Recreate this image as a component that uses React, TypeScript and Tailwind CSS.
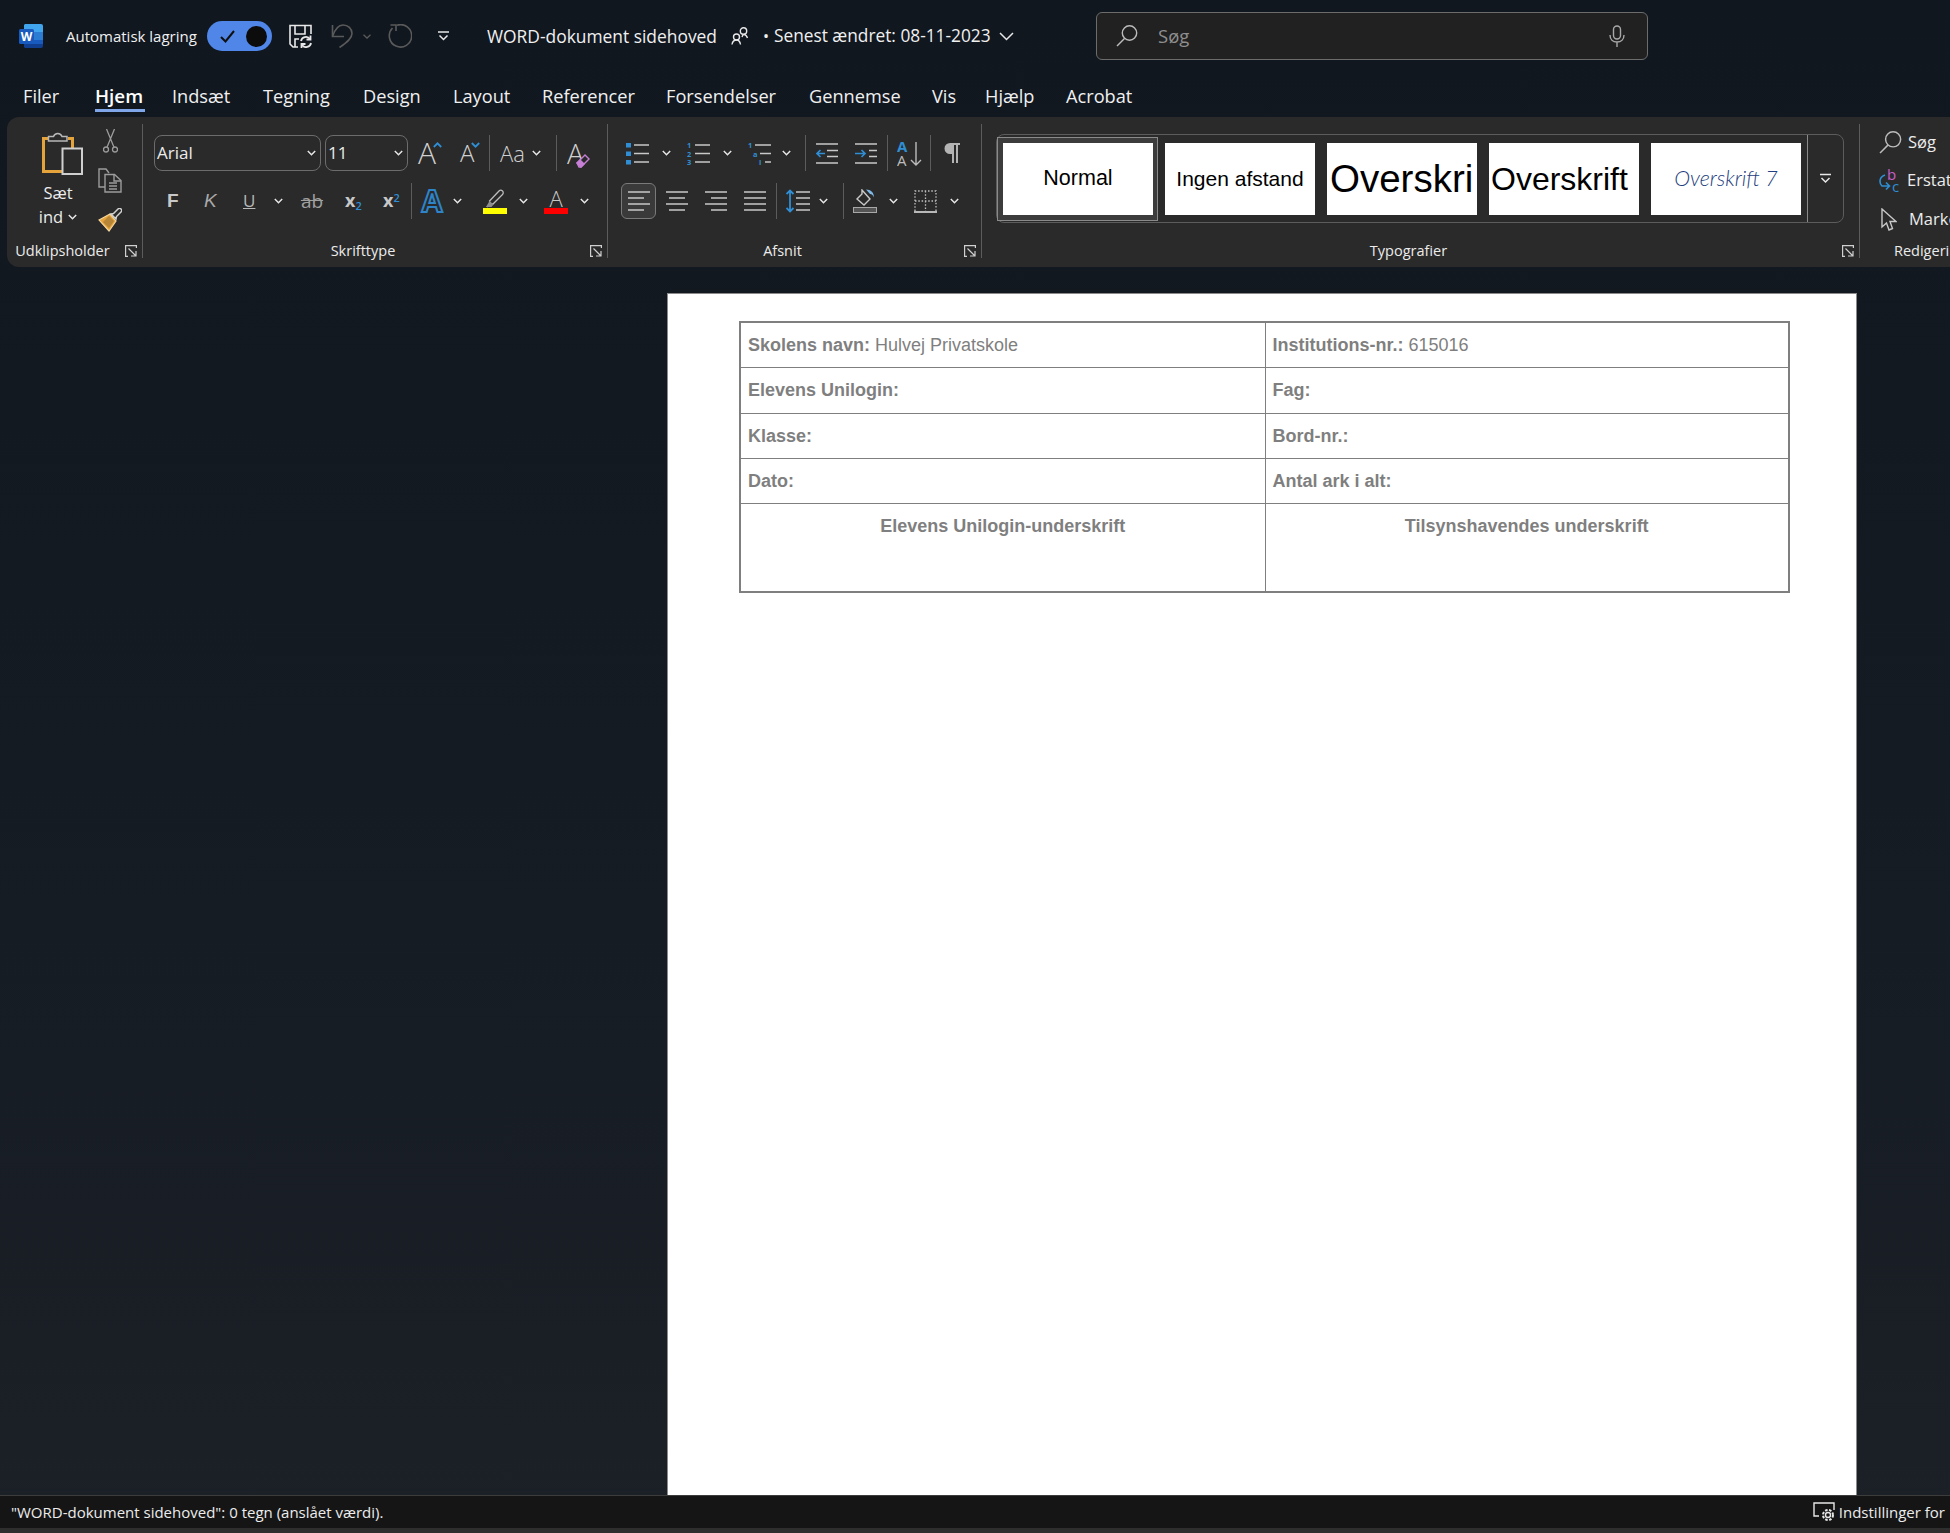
import React from 'react'

const Chev = ({ className = '' }: { className?: string }) => (
  <svg className={`w-[9px] h-[6px] shrink-0 ${className}`} viewBox="0 0 9 6" fill="none" stroke="#e6e6e6" strokeWidth="1.5">
    <path d="M.8 1l3.7 3.7L8.2 1" />
  </svg>
)

const Sep = ({ className = '' }: { className?: string }) => <div className={`w-px h-[36px] shrink-0 bg-[#5c5c5c] ${className}`} />

const Launcher = () => (
  <svg className="w-[12px] h-[12px]" viewBox="0 0 12 12" fill="none" stroke="#d0d0d0" strokeWidth="1.2">
    <path d="M11.4 3V.6H.6v10.8H3" />
    <path d="M3.5 3.5l7 7M11 6V11H6" />
  </svg>
)

const Group = ({ label, width, children, launcher = true }: { label: string; width: string; children: React.ReactNode; launcher?: boolean }) => (
  <div className={`${width} h-[134px] mt-[7px] shrink-0 flex flex-col border-r border-[#5c5c5c]`}>
    <div className="h-[120px]">{children}</div>
    <div className="h-[14px] flex items-center text-[14.500px] leading-[14px] text-[#ececec] whitespace-nowrap">
      <span className="flex-1 text-center pr-[7px]">{label}</span>
      {launcher && <span className="mr-[5px] flex"><Launcher /></span>}
    </div>
  </div>
)

function WordLogo() {
  return (
    <svg className="w-[24px] h-[24px]" viewBox="0 0 24 24">
      <path d="M6 0h16a2 2 0 0 1 2 2v6H5V1z" fill="#41a5ee" />
      <rect x="5" y="8" width="19" height="8" fill="#2b7cd3" />
      <rect x="5" y="16" width="19" height="4" fill="#185abd" />
      <path d="M5 20h19v2a2 2 0 0 1-2 2H6l-1-1z" fill="#103f91" />
      <rect x="0" y="5" width="15" height="15" rx="1.5" fill="#185abd" />
      <text x="7.5" y="16.5" textAnchor="middle" fontSize="12" fontWeight="700" fill="#fff" fontFamily="Open Sans">W</text>
    </svg>
  )
}

function SaveIcon() {
  return (
    <svg className="w-[24px] h-[24px]" viewBox="0 0 24 24" fill="none" stroke="#e8e8e8" strokeWidth="1.6">
      <path d="M10 23H5l-3-3V1.500h21V10" />
      <path d="M7 2v8h10V2M7 23v-8h4" />
      <path d="M13 17a5 5 0 0 1 9-2M23 19a5 5 0 0 1-9 2" strokeWidth="1.800" />
      <path d="M22.500 11.500v4h-4M13.500 24v-4h4" strokeWidth="1.800" />
    </svg>
  )
}

const UndoIcon = () => (
  <svg className="w-[23px] h-[24px]" viewBox="0 0 23 24" fill="none" stroke="#5a5a5a" strokeWidth="1.6">
    <path d="M1.500 1v11.500H13" />
    <path d="M1.500 12.500C4 5 8 1 12 1c5 0 9 3.500 9 8.500 0 5-5 9-12.500 14" />
  </svg>
)

const RedoIcon = () => (
  <svg className="w-[24px] h-[24px]" viewBox="0 0 24 24" fill="none" stroke="#5a5a5a" strokeWidth="1.6">
    <path d="M9 1.200A11.200 11.200 0 1 1 4.500 4" />
    <path d="M2.500 1h5.500v6" />
  </svg>
)

const Customize = () => (
  <svg className="w-[11px] h-[10px]" viewBox="0 0 11 10" fill="none" stroke="#e8e8e8" strokeWidth="1.5">
    <path d="M0 1h11" />
    <path d="M1.500 4.500L5.500 8.500l4-4" />
  </svg>
)

const People = () => (
  <svg className="w-[18px] h-[18px]" viewBox="0 0 18 18" fill="none" stroke="#e8e8e8" strokeWidth="1.4">
    <circle cx="5.500" cy="10" r="3" />
    <circle cx="12.500" cy="4" r="3.200" />
    <path d="M1 17.500c.5-3 2.500-4.500 4.500-4.500s3.500 1.500 4 4.500" />
    <path d="M11 10c.5-2 1-2.500 2-2.500s2.500 1 3.500 3.500" />
  </svg>
)

const SearchIcon = ({ className = '' }: { className?: string }) => (
  <svg className={`shrink-0 ${className}`} viewBox="0 0 22 22" fill="none" stroke="#bcbcbc" strokeWidth="1.400">
    <circle cx="13.500" cy="8" r="7.200" />
    <path d="M8.500 13.500L1 21" />
  </svg>
)

const Mic = () => (
  <svg className="w-[16px] h-[22px]" viewBox="0 0 16 22" fill="none" stroke="#a8a8a8" strokeWidth="1.4">
    <rect x="4.500" y="1" width="7" height="13" rx="3.500" />
    <path d="M1 10c0 4.500 3 7 7 7s7-2.500 7-7M8 17v5" />
  </svg>
)

const PasteIcon = () => (
  <svg className="w-[41px] h-[45px]" viewBox="0 0 41 45" fill="none">
    <path d="M6 8.500H1.500V41.500H20" stroke="#e5a33b" strokeWidth="3" />
    <path d="M26 8.500H30.500V18" stroke="#e5a33b" strokeWidth="3" />
    <path d="M6.500 11V6.500h5a4.500 4.500 0 0 1 8.500 0h5V11z" stroke="#b8b8b8" strokeWidth="1.500" fill="#2a2a2a" />
    <rect x="20.500" y="18.500" width="19.500" height="25.500" stroke="#cfcfcf" strokeWidth="2" fill="#2a2a2a" />
  </svg>
)

const Scissors = () => (
  <svg className="w-[15px] h-[24px]" viewBox="0 0 15 24" fill="none" stroke="#9c9c9c" strokeWidth="1.300">
    <circle cx="3" cy="20.500" r="2.500" />
    <circle cx="12" cy="20.500" r="2.500" />
    <path d="M4 18.300L11.500 0M11 18.300L3.500 0" />
  </svg>
)

const CopyIcon = () => (
  <svg className="w-[24px] h-[25px]" viewBox="0 0 24 25" fill="none" stroke="#9c9c9c" strokeWidth="1.400">
    <path d="M7 19H1V1h7l3 4" />
    <path d="M7 6.500h9.500L23 12.500V24H7z" fill="#2a2a2a" />
    <path d="M16 7v6h7M11 15h8M11 18h8M11 21h8" />
  </svg>
)

const BrushIcon = () => (
  <svg className="w-[24px] h-[24px]" viewBox="0 0 24 24" fill="none">
    <path d="M1 12l11-6 6 7-7 10z" fill="#e5a33b" stroke="#f4d59a" strokeWidth="1.200" />
    <path d="M5 14l6 6 5-7-5-5z" fill="#2a2a2a" fillOpacity=".25" />
    <path d="M13 6l2.500-.5L20 1a2 2 0 0 1 3 3l-4.500 4.500L18 11z" stroke="#d0d0d0" strokeWidth="1.500" fill="#2a2a2a" />
  </svg>
)

const Caret = ({ down = false }: { down?: boolean }) => (
  <svg className="w-[9px] h-[6px] self-start mt-[7px] -ml-[3px] shrink-0" viewBox="0 0 9 6" fill="none" stroke="#2f8ed4" strokeWidth="1.800">
    <path d={down ? 'M.8 1l3.700 3.700L8.200 1' : 'M.8 5l3.700-3.700L8.200 5'} />
  </svg>
)

const Eraser = () => (
  <svg className="w-[14px] h-[14px]" viewBox="0 0 14 14" fill="none" stroke="#c77fd6" strokeWidth="1.400">
    <path d="M1 9l8-8 4 4-8 8H3z" fill="#2a2a2a" />
    <path d="M1 9l4 4 3-3-4-4z" fill="#c77fd6" />
  </svg>
)

const FontBlue = () => (
  <svg className="w-[24px] h-[24px]" viewBox="0 0 24 24">
    <text x="12" y="23" textAnchor="middle" fontSize="30" fontWeight="700" fill="#2a2a2a" stroke="#2d84c8" strokeWidth="2" fontFamily="Open Sans">A</text>
  </svg>
)

const HighlightIcon = () => (
  <div className="w-[24px] flex flex-col items-center">
    <svg className="w-[24px] h-[19px]" viewBox="0 0 24 19" fill="none">
      <path d="M4 18l3-3-.5-3L16 2a2.200 2.200 0 0 1 3.500 3.500L10 15l-3 0z" stroke="#bcbcbc" strokeWidth="1.300" />
      <path d="M3 18l3.500-6 4 3.500-2 2.500z" fill="#8c8c8c" />
    </svg>
    <div className="w-[24px] h-[6px] bg-[#ffff00]" />
  </div>
)

const Lines = ({ rows }: { rows: [number, number][] }) => (
  <svg className="w-[22px] h-[20px]" viewBox="0 0 22 20" stroke="#c8c8c8" strokeWidth="1.500">
    {rows.map((r, i) => <path key={i} d={`M${r[0]} ${1 + i * 6}H${r[1]}`} />)}
  </svg>
)

const BulletList = () => (
  <svg className="w-[23px] h-[23px]" viewBox="0 0 23 23" stroke="#c8c8c8" strokeWidth="1.500">
    <path d="M8 3h15M8 11.500h15M8 20h15" />
    <g fill="#2f8ed4" stroke="none">
      <rect x="0" y="1" width="5" height="4.500" />
      <rect x="0" y="9.500" width="5" height="4.500" />
      <rect x="0" y="18" width="5" height="4.500" />
    </g>
  </svg>
)

const NumberList = () => (
  <svg className="w-[23px] h-[23px]" viewBox="0 0 23 23" stroke="#c8c8c8" strokeWidth="1.500">
    <path d="M8 3h15M8 11.500h15M8 20h15" />
    <g fill="#2f8ed4" stroke="none" fontSize="7.500" fontWeight="700" fontFamily="Open Sans">
      <text x="0" y="6">1</text>
      <text x="0" y="14.500">2</text>
      <text x="0" y="23">3</text>
    </g>
  </svg>
)

const MultiList = () => (
  <svg className="w-[23px] h-[23px]" viewBox="0 0 23 23" stroke="#c8c8c8" strokeWidth="1.500">
    <path d="M7 3h16M12 11.500h11M17 20h6" />
    <g fill="#2f8ed4" stroke="none" fontSize="7.500" fontWeight="700" fontFamily="Open Sans">
      <text x="0" y="6">1</text>
      <text x="5" y="14.500">a</text>
      <text x="11" y="23">i</text>
    </g>
  </svg>
)

const Indent = ({ flip = false }: { flip?: boolean }) => (
  <svg className="w-[22px] h-[21px]" viewBox="0 0 22 21" fill="none">
    <path d={flip ? 'M0 1h22M0 20h22M14 7.500h8M14 13.500h8' : 'M0 1h22M0 20h22M11 7.500h11M11 13.500h11'} stroke="#c8c8c8" strokeWidth="1.500" />
    <path d={flip ? 'M0 10.500h10M6.500 7l3.500 3.500L6.500 14' : 'M1 10.500h8M4.500 7L1 10.500 4.500 14'} stroke="#2f8ed4" strokeWidth="1.700" />
  </svg>
)

const SortIcon = () => (
  <svg className="w-[25px] h-[25px]" viewBox="0 0 25 25" fill="none">
    <text x="0" y="11" fontSize="15" fontWeight="700" fill="#2f8ed4" fontFamily="Open Sans">A</text>
    <text x="0" y="25" fontSize="15" fontWeight="400" fill="#bcbcbc" fontFamily="Open Sans">A</text>
    <path d="M19 1v23M14 19l5 5 5-5" stroke="#bcbcbc" strokeWidth="1.400" />
  </svg>
)

const Pilcrow = () => (
  <svg className="w-[16px] h-[20px]" viewBox="0 0 16 20" fill="#b4b4b4">
    <path d="M6 0h10v2h-2v18h-2V2h-2v18H8V11H6A5.500 5.500 0 0 1 6 0z" />
  </svg>
)

const SpacingIcon = () => (
  <svg className="w-[24px] h-[24px]" viewBox="0 0 24 24" fill="none">
    <path d="M10 3h14M10 9h14M10 15h14M10 21h14" stroke="#c8c8c8" strokeWidth="1.500" />
    <path d="M4 1v22M.5 5L4 1.500 7.500 5M.5 19L4 22.500 7.500 19" stroke="#2f8ed4" strokeWidth="1.800" />
  </svg>
)

const ShadingIcon = () => (
  <svg className="w-[24px] h-[24px]" viewBox="0 0 24 24" fill="none">
    <path d="M9 1l8 9-6 6-7-6 5-5z" stroke="#c8c8c8" strokeWidth="1.400" />
    <path d="M13 .5c5 0 8 3 8 8-1-2-2-3.500-4-3.500z" fill="#7fb8e6" />
    <rect x=".5" y="18.500" width="23" height="5" fill="#555" stroke="#a8a8a8" />
  </svg>
)

const BordersIcon = () => (
  <svg className="w-[23px] h-[23px]" viewBox="0 0 23 23" fill="none">
    <path d="M1 21V1h21v20M11.500 1v20M1 11h21" stroke="#c0c0c0" strokeWidth="1.300" strokeDasharray="1.500 1.800" />
    <path d="M0 22h23" stroke="#e8e8e8" strokeWidth="1.500" />
  </svg>
)

const MoreIcon = () => (
  <svg className="w-[11px] h-[11px]" viewBox="0 0 11 11" fill="none" stroke="#e8e8e8" strokeWidth="1.500">
    <path d="M0 1.500h11M1.500 5L5.500 9l4-4" />
  </svg>
)

const ReplaceIcon = () => (
  <svg className="w-[22px] h-[26px] shrink-0" viewBox="0 0 22 26" fill="none">
    <text x="8" y="12" fontSize="15" fill="#c75fc9" fontFamily="Open Sans">b</text>
    <text x="13" y="24" fontSize="15" fill="#2f8ed4" fontFamily="Open Sans">c</text>
    <path d="M6 7C0 9 0 15 3 18h7M7 14.500l3.500 3.500L7 21.500" stroke="#2f8ed4" strokeWidth="1.600" />
  </svg>
)

const CursorIcon = () => (
  <svg className="w-[16px] h-[23px] shrink-0" viewBox="0 0 16 23" fill="none" stroke="#c8c8c8" strokeWidth="1.400">
    <path d="M1 1v18l4.500-4 2.500 7 3.500-1.500L9 13.500h6z" />
  </svg>
)

const SettingsIcon = () => (
  <svg className="w-[22px] h-[20px]" viewBox="0 0 22 20" fill="none" stroke="#e8e8e8" strokeWidth="1.400">
    <path d="M6 14H1V1h20v7" />
    <circle cx="15" cy="13" r="2.500" />
    <circle cx="15" cy="13" r="5" strokeDasharray="2.500 1.500" strokeWidth="2" />
  </svg>
)

const Cell = ({ label, value, center = false }: { label: string; value?: string; center?: boolean }) => (
  <td className={`border border-[#7f7f7f] align-top pt-[12px] px-[7px] leading-[20px] ${center ? 'text-center' : ''}`}>
    <b>{label}</b>{value ? ` ${value}` : ''}
  </td>
)

export default function App() {
  return (
    <div className="w-[1950px] h-[1533px] overflow-hidden flex flex-col bg-linear-to-b from-[#10171f] via-[#141b23] to-[#1c2027] text-white font-['Open_Sans','Noto_Sans',sans-serif]">
      {/* title bar */}
      <div className="h-[72px] shrink-0 flex items-center pl-[19px] text-[15px] text-[#f0f0f0]">
        <WordLogo />
        <span className="ml-[23px] w-[141px] whitespace-nowrap text-[15px]">Automatisk lagring</span>
        <div className="w-[65px] h-[30px] rounded-full bg-[#4f86e8] flex items-center justify-between pl-[13px] pr-[5px]">
          <svg className="w-[15px] h-[13px]" viewBox="0 0 15 13" fill="none" stroke="#101010" strokeWidth="2"><path d="M1 7l4.500 4.500L14 1" /></svg>
          <div className="w-[21px] h-[21px] rounded-full bg-[#0c0c0c]" />
        </div>
        <div className="ml-[16px] flex"><SaveIcon /></div>
        <div className="ml-[19px] flex"><UndoIcon /></div>
        <svg className="ml-[9px] w-[8px] h-[5px]" viewBox="0 0 8 5" fill="none" stroke="#5a5a5a" strokeWidth="1.300"><path d="M.5.8L4 4 7.500.8" /></svg>
        <div className="ml-[17px] flex"><RedoIcon /></div>
        <div className="ml-[26px] flex"><Customize /></div>
        <span className="ml-[38px] w-[244px] whitespace-nowrap text-[17.400px]">WORD-dokument sidehoved</span>
        <People />
        <span className="ml-[14px] w-[11px] text-[16px]">•</span>
        <span className="w-[225px] whitespace-nowrap text-[17.300px]">Senest ændret: 08-11-2023</span>
        <svg className="w-[15px] h-[9px]" viewBox="0 0 15 9" fill="none" stroke="#e8e8e8" strokeWidth="1.500"><path d="M1 1l6.500 6.500L14 1" /></svg>
        <div className="ml-[82px] w-[552px] h-[48px] rounded-md border border-[#6c6c6c] bg-[#212121] flex items-center pl-[19px] pr-[22px]">
          <SearchIcon className="w-[22px] h-[22px]" />
          <span className="ml-[20px] text-[18.500px] text-[#8e8e8e]">Søg</span>
          <div className="ml-auto flex"><Mic /></div>
        </div>
      </div>

      {/* tabs */}
      <div className="h-[45px] shrink-0 ml-[23px] grid grid-cols-[72px_77px_91px_100px_90px_89px_124px_143px_123px_53px_81px_auto] text-[18.200px] text-[#f0f0f0] items-start pt-[12px] leading-[24px]">
        <span>Filer</span>
        <span className="w-[50px] pb-[1px] border-b-[3px] border-[#7ea6e8] h-[28px] font-semibold text-white text-[18.800px] whitespace-nowrap">Hjem</span>
        <span>Indsæt</span>
        <span>Tegning</span>
        <span>Design</span>
        <span>Layout</span>
        <span>Referencer</span>
        <span>Forsendelser</span>
        <span>Gennemse</span>
        <span>Vis</span>
        <span>Hjælp</span>
        <span>Acrobat</span>
      </div>

      {/* ribbon */}
      <div className="h-[150px] shrink-0 ml-[7px] flex bg-[#2a2a2a] rounded-l-xl overflow-hidden">
        <Group label="Udklipsholder" width="w-[136px]">
          <div className="flex">
            <div className="w-[62px] ml-[20px] pt-[6px] flex flex-col items-center text-[16.500px] leading-[24px] text-[#ececec]">
              <div className="ml-[9px] flex"><PasteIcon /></div>
              <span className="mt-[6px]">Sæt</span>
              <span className="flex items-center gap-[5px]">ind <Chev /></span>
            </div>
            <div className="ml-[9px] w-[24px] pt-[5px] flex flex-col items-center gap-[15px]">
              <Scissors />
              <CopyIcon />
              <BrushIcon />
            </div>
          </div>
        </Group>

        <Group label="Skrifttype" width="w-[465px]">
          <div className="pt-[11px] flex flex-col gap-[12px]">
            <div className="h-[36px] flex items-center text-[#d0d0d0]">
              <div className="ml-[11px] w-[167px] h-[36px] rounded-lg border border-[#6c6c6c] flex items-center justify-between pl-[2px] pr-[4px] text-[17px] text-[#ececec]">Arial <Chev /></div>
              <div className="ml-[4px] w-[83px] h-[36px] rounded-lg border border-[#6c6c6c] flex items-center justify-between pl-[2px] pr-[4px] text-[17px] text-[#ececec]">11 <Chev /></div>
              <div className="ml-[10px] w-[24px] flex items-center"><span className="text-[30px] leading-[36px] font-light">A</span><Caret /></div>
              <div className="ml-[18px] w-[20px] flex items-center"><span className="text-[24px] leading-[36px] font-light">A</span><Caret down /></div>
              <Sep className="ml-[9px]" />
              <span className="ml-[10px] w-[23px] text-[22px] font-light whitespace-nowrap">Aa</span>
              <Chev className="ml-[9px]" />
              <Sep className="ml-[15px]" />
              <div className="relative ml-[10px] w-[23px]">
                <span className="text-[28px] leading-[36px] font-light">A</span>
                <div className="absolute right-0 bottom-[3px] flex"><Eraser /></div>
              </div>
            </div>
            <div className="h-[36px] flex items-center text-[#c8c8c8]">
              <span className="ml-[24px] w-[10px] pb-[2px] font-['Liberation_Sans',sans-serif] font-bold text-[19px] leading-none">F</span>
              <span className="ml-[27px] w-[13px] pb-[2px] font-['Liberation_Sans',sans-serif] italic text-[#a8a8a8] text-[19px] leading-none">K</span>
              <span className="ml-[26px] w-[13px] text-[17px] leading-[20px] underline text-[#b8b8b8]">U</span>
              <Chev className="ml-[18px]" />
              <span className="ml-[17px] w-[24px] text-[19px] text-[#a0a0a0] line-through text-center leading-[24px]">ab</span>
              <span className="ml-[21px] w-[17px] pb-[2px] font-bold text-[18px] leading-[20px] whitespace-nowrap">x<sub className="text-[11px] text-[#2f8ed4] font-semibold">2</sub></span>
              <span className="ml-[21px] w-[17px] pb-[2px] font-bold text-[18px] leading-[20px] whitespace-nowrap">x<sup className="text-[11px] text-[#2f8ed4] font-semibold">2</sup></span>
              <Sep className="ml-[11px]" />
              <div className="ml-[8px] flex"><FontBlue /></div>
              <Chev className="ml-[9px]" />
              <div className="ml-[21px] flex"><HighlightIcon /></div>
              <Chev className="ml-[12px]" />
              <div className="ml-[16px] w-[24px] flex flex-col items-center">
                <span className="text-[22px] leading-[19px] font-light">A</span>
                <div className="w-[24px] h-[6px] bg-[#ff0000]" />
              </div>
              <Chev className="ml-[12px]" />
            </div>
          </div>
        </Group>

        <Group label="Afsnit" width="w-[374px]">
          <div className="pt-[11px] flex flex-col gap-[12px]">
            <div className="h-[36px] flex items-center">
              <div className="ml-[18px] flex"><BulletList /></div>
              <Chev className="ml-[13px]" />
              <div className="ml-[16px] flex"><NumberList /></div>
              <Chev className="ml-[13px]" />
              <div className="ml-[16px] flex"><MultiList /></div>
              <Chev className="ml-[11px]" />
              <Sep className="ml-[14px]" />
              <div className="ml-[10px] flex"><Indent /></div>
              <div className="ml-[17px] flex"><Indent flip /></div>
              <Sep className="ml-[10px]" />
              <div className="ml-[9px] flex"><SortIcon /></div>
              <Sep className="ml-[8px]" />
              <div className="ml-[13px] flex"><Pilcrow /></div>
            </div>
            <div className="h-[36px] flex items-center">
              <div className="ml-[13px] w-[35px] h-[36px] rounded-md border border-[#7a7a7a] bg-[#3a3a3a] flex items-center justify-center">
                <Lines rows={[[0, 22], [0, 16], [0, 22], [0, 16]]} />
              </div>
              <div className="ml-[10px] flex"><Lines rows={[[0, 22], [3, 19], [0, 22], [3, 19]]} /></div>
              <div className="ml-[17px] flex"><Lines rows={[[0, 22], [6, 22], [0, 22], [6, 22]]} /></div>
              <div className="ml-[17px] flex"><Lines rows={[[0, 22], [0, 22], [0, 22], [0, 22]]} /></div>
              <Sep className="ml-[10px]" />
              <div className="ml-[9px] flex"><SpacingIcon /></div>
              <Chev className="ml-[9px]" />
              <Sep className="ml-[15px]" />
              <div className="ml-[9px] flex"><ShadingIcon /></div>
              <Chev className="ml-[12px]" />
              <div className="ml-[16px] flex"><BordersIcon /></div>
              <Chev className="ml-[13px]" />
            </div>
          </div>
        </Group>

        <Group label="Typografier" width="w-[878px]">
          <div className="ml-[14px] mt-[10px] w-[848px] h-[89px] rounded-lg border border-[#5c5c5c] flex text-black font-['Liberation_Sans',sans-serif]">
            <div className="mt-[2px] h-[84px] w-[161px] border border-[#8a8a8a] bg-[#3c3c3c] pl-[5px] pt-[5px] shrink-0">
              <div className="w-[150px] h-[72px] bg-white flex items-center justify-center text-[21.500px] pb-[1px]">Normal</div>
            </div>
            <div className="ml-[7px] mt-[8px] w-[150px] h-[72px] bg-white flex items-center justify-center text-[21px] pb-[1px] shrink-0 whitespace-nowrap">Ingen afstand</div>
            <div className="ml-[12px] mt-[8px] w-[150px] h-[72px] bg-white flex items-center pl-[3px] text-[38.500px] shrink-0 overflow-hidden whitespace-nowrap">Overskri</div>
            <div className="ml-[12px] mt-[8px] w-[150px] h-[72px] bg-white flex items-center pl-[2px] text-[32px] shrink-0 overflow-hidden whitespace-nowrap">Overskrift</div>
            <div className="ml-[12px] mt-[8px] w-[150px] h-[72px] bg-white flex items-center justify-center text-[21.500px] pb-[2px] italic font-light text-[#1f3f80] shrink-0 font-['Lato',sans-serif] whitespace-nowrap">Overskrift 7</div>
            <div className="ml-auto w-[36px] border-l border-[#8a8a8a] rounded-r-lg flex items-center justify-center"><MoreIcon /></div>
          </div>
        </Group>

        <div className="pt-[6px] w-[90px] shrink-0 overflow-hidden whitespace-nowrap flex flex-col text-[16.500px] text-[#ececec]">
          <div className="h-[121px] pl-[19px] flex flex-col">
            <div className="h-[38px] flex items-center gap-[6px]"><SearchIcon className="w-[23px] h-[23px]" /> Søg</div>
            <div className="h-[39px] flex items-center gap-[6px]"><ReplaceIcon /> Erstat</div>
            <div className="h-[39px] flex items-center gap-[12px] pl-[2px]"><CursorIcon /> Marker</div>
          </div>
          <span className="h-[14px] pl-[34px] text-[14.500px] leading-[14px]">Redigering</span>
        </div>
      </div>

      {/* document */}
      <div className="flex-1 min-h-0 pt-[26px] pl-[667px] overflow-hidden">
        <div className="w-[1190px] h-[1300px] bg-white border-x border-t border-[#8a8a8a] pt-[27px] pl-[71px] text-[#7f7f7f] font-['Liberation_Sans',sans-serif] text-[18px]">
          <table className="w-[1051px] table-fixed border-collapse border-2 border-[#7f7f7f]">
            <colgroup>
              <col className="w-[525px]" />
              <col />
            </colgroup>
            <tbody>
              <tr className="h-[45px]"><Cell label="Skolens navn:" value="Hulvej Privatskole" /><Cell label="Institutions-nr.:" value="615016" /></tr>
              <tr className="h-[46px]"><Cell label="Elevens Unilogin:" /><Cell label="Fag:" /></tr>
              <tr className="h-[45px]"><Cell label="Klasse:" /><Cell label="Bord-nr.:" /></tr>
              <tr className="h-[45px]"><Cell label="Dato:" /><Cell label="Antal ark i alt:" /></tr>
              <tr className="h-[89px]"><Cell center label="Elevens Unilogin-underskrift" /><Cell center label="Tilsynshavendes underskrift" /></tr>
            </tbody>
          </table>
        </div>
      </div>

      {/* status bar */}
      <div className="h-[33px] shrink-0 bg-[#151515] border-t border-[#3c3c3c] flex items-center justify-between pl-[11px] pr-[5px] text-[15px] text-[#ececec] whitespace-nowrap">
        <span>"WORD-dokument sidehoved": 0 tegn (anslået værdi).</span>
        <span className="flex items-center gap-[4px]"><SettingsIcon /> Indstillinger for</span>
      </div>
      <div className="h-[5px] shrink-0 bg-[#2e2e2e]" />
    </div>
  )
}
